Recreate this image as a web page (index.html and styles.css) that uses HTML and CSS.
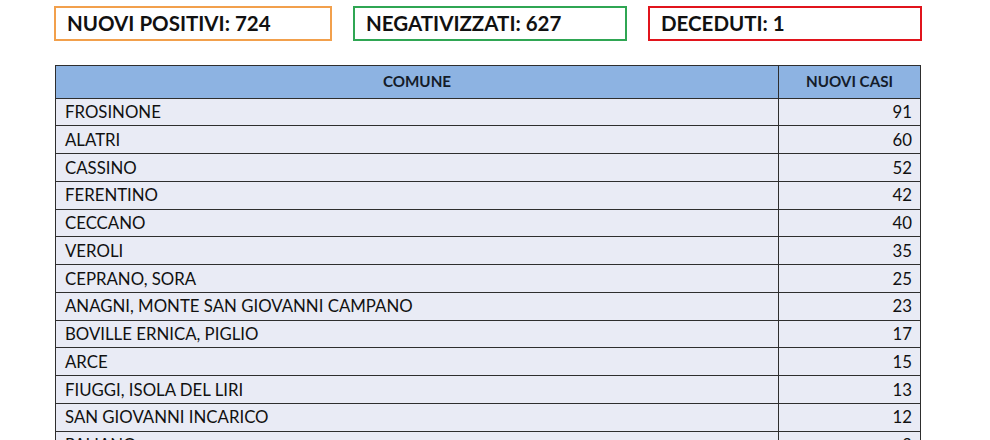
FILE: index.html
```html
<!DOCTYPE html>
<html lang="it">
<head>
<meta charset="utf-8">
<title>Comuni - nuovi casi</title>
<link rel="stylesheet" href="styles.css">
</head>
<body>
<div class="page">
  <div class="stats">
    <div class="stat stat-pos">NUOVI POSITIVI: 724</div>
    <div class="stat stat-neg">NEGATIVIZZATI: 627</div>
    <div class="stat stat-dead">DECEDUTI: 1</div>
  </div>
  <table class="cases">
    <thead>
      <tr><th class="c-name">COMUNE</th><th class="c-num">NUOVI CASI</th></tr>
    </thead>
    <tbody>
      <tr><td>FROSINONE</td><td class="num">91</td></tr>
      <tr><td>ALATRI</td><td class="num">60</td></tr>
      <tr><td>CASSINO</td><td class="num">52</td></tr>
      <tr><td>FERENTINO</td><td class="num">42</td></tr>
      <tr><td>CECCANO</td><td class="num">40</td></tr>
      <tr><td>VEROLI</td><td class="num">35</td></tr>
      <tr><td>CEPRANO, SORA</td><td class="num">25</td></tr>
      <tr><td>ANAGNI, MONTE SAN GIOVANNI CAMPANO</td><td class="num">23</td></tr>
      <tr><td>BOVILLE ERNICA, PIGLIO</td><td class="num">17</td></tr>
      <tr><td>ARCE</td><td class="num">15</td></tr>
      <tr><td>FIUGGI, ISOLA DEL LIRI</td><td class="num">13</td></tr>
      <tr><td>SAN GIOVANNI INCARICO</td><td class="num">12</td></tr>
      <tr><td>PALIANO</td><td class="num">9</td></tr>
    </tbody>
  </table>
</div>
</body>
</html>
```
FILE: styles.css
```css
html, body {
  margin: 0;
  padding: 0;
  background: #ffffff;
  overflow: hidden;
}
body {
  font-family: Lato, "Open Sans", "Liberation Sans", sans-serif;
  color: #111111;
}
.page {
  padding: 6px 0 0 54px;
  width: 868px;
}
.stats {
  display: flex;
  gap: 21px;
}
.stat {
  box-sizing: border-box;
  height: 35px;
  width: 274px;
  border: 2px solid;
  padding-left: 11px;
  display: flex;
  align-items: center;
  font-weight: 700;
  font-size: 20.5px;
  line-height: 1;
  color: #111;
}
.stat-pos { width: 278px; border-color: #f2a04c; }
.stat-neg { border-color: #2fa653; }
.stat-dead { border-color: #e1141c; }

.cases {
  margin: 24px 0 0 1px;
  width: 866px;
  border-collapse: collapse;
  font-size: 16.8px;
  line-height: 1;
}
.cases th, .cases td {
  border: 1.5px solid #2e2e2e;
  padding: 0 9px;
}
.cases thead th {
  background: #8db3e2;
  height: 31.5px;
  font-size: 15.2px;
  font-weight: 700;
  text-align: center;
  color: #141c2a;
}
.cases .c-num { width: 123px; }
.cases tbody td {
  background: #e9ebf5;
  height: 25.25px;
  padding-top: 1.5px;
}
.cases td.num {
  text-align: right;
  padding-right: 8px;
}
```
